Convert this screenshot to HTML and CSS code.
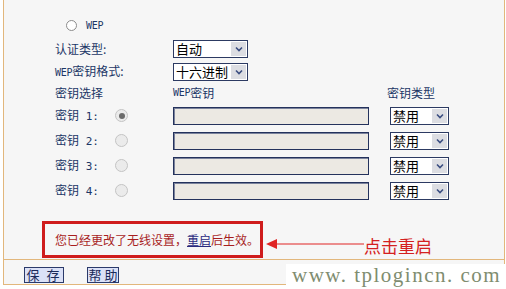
FILE: index.html
```html
<!DOCTYPE html>
<html lang="zh-CN">
<head>
<meta charset="utf-8">
<title>无线安全设置</title>
<link rel="stylesheet" href="styles.css">
</head>
<body>
<div class="panel">
  <div class="content">
    <div class="row row-top">
      <span class="radio radio-off"></span>
      <span class="ascii wep">WEP</span>
    </div>
    <div class="row row-top">
      <span class="label wide">认证类型:</span>
      <div class="select sel-auth"><span class="sel-text">自动</span><span class="sel-btn"><svg width="8" height="6" viewBox="0 0 8 6"><path d="M1 1.5 L4 4.5 L7 1.5" fill="none" stroke="#3a4d80" stroke-width="1.6"/></svg></span></div>
    </div>
    <div class="row row-top">
      <span class="label wide"><span class="ascii">WEP</span>密钥格式:</span>
      <div class="select sel-auth"><span class="sel-text">十六进制</span><span class="sel-btn"><svg width="8" height="6" viewBox="0 0 8 6"><path d="M1 1.5 L4 4.5 L7 1.5" fill="none" stroke="#3a4d80" stroke-width="1.6"/></svg></span></div>
    </div>
    <div class="row row-head">
      <span class="label wide">密钥选择</span>
      <span class="label field-col"><span class="ascii">WEP</span>密钥</span>
      <span class="label">密钥类型</span>
    </div>
    <div class="row row-key">
      <span class="label key-label">密钥<span class="mono"> 1:</span></span>
      <span class="radio-col"><span class="radio radio-dis checked"></span></span>
      <span class="field-col"><span class="input"></span></span>
      <div class="select sel-type"><span class="sel-text">禁用</span><span class="sel-btn"><svg width="8" height="6" viewBox="0 0 8 6"><path d="M1 1.5 L4 4.5 L7 1.5" fill="none" stroke="#3a4d80" stroke-width="1.6"/></svg></span></div>
    </div>
    <div class="row row-key">
      <span class="label key-label">密钥<span class="mono"> 2:</span></span>
      <span class="radio-col"><span class="radio radio-dis"></span></span>
      <span class="field-col"><span class="input"></span></span>
      <div class="select sel-type"><span class="sel-text">禁用</span><span class="sel-btn"><svg width="8" height="6" viewBox="0 0 8 6"><path d="M1 1.5 L4 4.5 L7 1.5" fill="none" stroke="#3a4d80" stroke-width="1.6"/></svg></span></div>
    </div>
    <div class="row row-key">
      <span class="label key-label">密钥<span class="mono"> 3:</span></span>
      <span class="radio-col"><span class="radio radio-dis"></span></span>
      <span class="field-col"><span class="input"></span></span>
      <div class="select sel-type"><span class="sel-text">禁用</span><span class="sel-btn"><svg width="8" height="6" viewBox="0 0 8 6"><path d="M1 1.5 L4 4.5 L7 1.5" fill="none" stroke="#3a4d80" stroke-width="1.6"/></svg></span></div>
    </div>
    <div class="row row-key">
      <span class="label key-label">密钥<span class="mono"> 4:</span></span>
      <span class="radio-col"><span class="radio radio-dis"></span></span>
      <span class="field-col"><span class="input"></span></span>
      <div class="select sel-type"><span class="sel-text">禁用</span><span class="sel-btn"><svg width="8" height="6" viewBox="0 0 8 6"><path d="M1 1.5 L4 4.5 L7 1.5" fill="none" stroke="#3a4d80" stroke-width="1.6"/></svg></span></div>
    </div>
    <div class="notice-row">
      <div class="notice">您已经更改了无线设置，<a class="reboot">重启</a>后生效。</div>
      <svg class="arrow" width="98" height="12" viewBox="0 0 98 12"><polygon points="0,6 11,1 11,11" fill="#e02424"/><line x1="10" y1="6" x2="98" y2="6" stroke="#e02424" stroke-width="1.2"/></svg>
      <span class="hint">点击重启</span>
    </div>
  </div>
  <div class="footer">
    <button class="btn btn-save">保 存</button>
    <button class="btn btn-help">帮 助</button>
  </div>
</div>
<div class="watermark">www. tplogincn. com</div>
</body>
</html>
```
FILE: styles.css
```css
html, body {
  margin: 0;
  padding: 0;
  background: #ffffff;
}
body {
  width: 506px;
  height: 289px;
  position: relative;
  overflow: hidden;
  font-family: "Noto Sans CJK SC", "Liberation Sans", sans-serif;
  font-size: 12px;
  color: #1c3766;
}
.panel {
  margin-left: 3px;
  width: 500px;
  border-left: 1px solid #e2b77c;
  border-right: 1px solid #e2b77c;
  background: #f6f6f6;
}
.content {
  height: 260px;
  border-bottom: 1px solid #e2b77c;
  padding: 14px 0 0 51px;
  box-sizing: border-box;
}
.row {
  display: flex;
  align-items: center;
}
.row-top { height: 23px; }
.row-head { height: 20px; }
.row-key { height: 25px; }
.label {
  line-height: 14px;
  white-space: nowrap;
}
.wide { width: 118px; }
.key-label { width: 60px; }
.radio-col { width: 58px; display: flex; align-items: center; }
.field-col { width: 214px; display: flex; align-items: center; }
.ascii {
  font-family: "DejaVu Sans Mono", monospace;
  font-size: 10px;
  letter-spacing: -0.3px;
}
.mono {
  font-family: "DejaVu Sans Mono", monospace;
  font-size: 11px;
}
.wep { margin-left: 9px; }
.radio {
  display: inline-block;
  width: 11px;
  height: 11px;
  border-radius: 50%;
  box-sizing: border-box;
  position: relative;
}
.radio-off {
  margin-left: 11px;
  background: #ffffff;
  border: 1px solid #8c8c8c;
}
.radio-dis {
  width: 13px;
  height: 13px;
  background: #ebebeb;
  border: 1px solid #c4c4c4;
}
.checked::after {
  content: "";
  position: absolute;
  left: 2.5px;
  top: 2.5px;
  width: 6px;
  height: 6px;
  border-radius: 50%;
  background: #6b6b6b;
}
.select {
  display: flex;
  align-items: stretch;
  height: 18px;
  border: 1px solid #2c3a62;
  background: #ffffff;
  box-sizing: border-box;
  color: #000000;
  font-size: 13px;
}
.sel-auth { width: 75px; }
.sel-type { width: 59px; margin-left: 3px; }
.sel-text {
  flex: 1;
  padding-left: 2px;
  display: flex;
  align-items: center;
  white-space: nowrap;
  line-height: 1;
}
.sel-btn {
  width: 15px;
  margin: 1px;
  background: #dcdde2;
  display: flex;
  align-items: center;
  justify-content: center;
  flex: none;
}
.input {
  display: block;
  width: 196px;
  height: 18px;
  box-sizing: border-box;
  border: 1px solid #24325c;
  box-shadow: inset 1px 1px 0 #7a829c;
  background: #ece9e3;
}
.notice-row {
  display: flex;
  align-items: center;
  margin: 18px 0 0 -13px;
}
.notice {
  width: 221px;
  height: 37px;
  box-sizing: border-box;
  border: 3px solid #cf1c1c;
  padding-left: 10px;
  line-height: 31px;
  color: #a81e1e;
  white-space: nowrap;
}
.reboot {
  color: #2a2a7e;
  text-decoration: underline;
}
.arrow {
  margin: 8px 0 0 3px;
}
.hint {
  font-size: 17px;
  color: #d42020;
  margin-top: 12px;
  line-height: 18px;
}
.footer {
  height: 25px;
  border-bottom: 1px solid #e2b77c;
  padding: 7px 0 0 20px;
  box-sizing: border-box;
  display: flex;
  align-items: flex-start;
  gap: 23px;
}
.btn {
  height: 16px;
  padding: 0;
  border: 1px solid #2b3a6a;
  background: #dbe1f7;
  color: #1a2a5a;
  font-family: "Noto Sans CJK SC", sans-serif;
  font-size: 13px;
  line-height: 14px;
  letter-spacing: 2px;
}
.btn-save { width: 40px; }
.btn-help { width: 32px; letter-spacing: 0; }
.watermark {
  position: absolute;
  right: 0;
  bottom: 0;
  width: 220px;
  height: 25px;
  background: #ffffff;
  font-family: "Liberation Serif", serif;
  font-size: 21px;
  line-height: 22px;
  color: #7f8d70;
  padding-left: 6px;
  box-sizing: border-box;
  letter-spacing: 1.5px;
  white-space: nowrap;
}
```
